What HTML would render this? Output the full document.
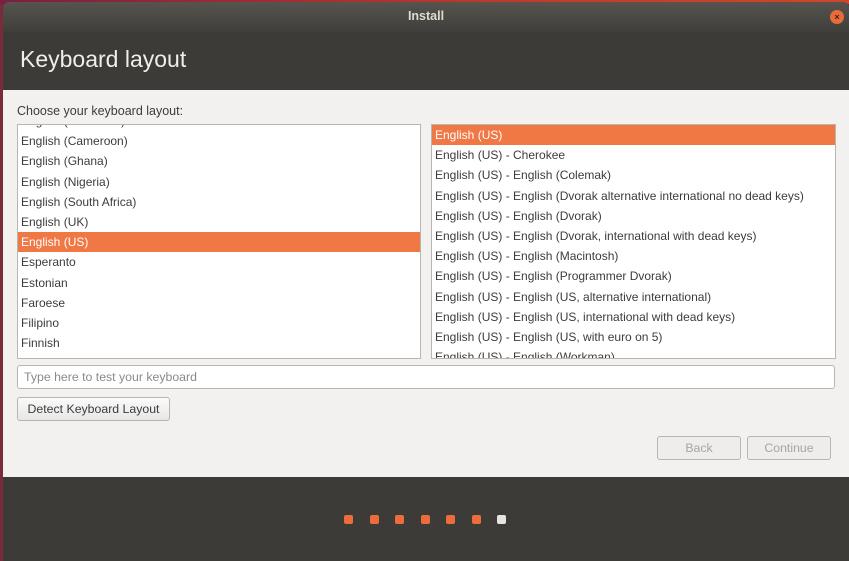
<!DOCTYPE html>
<html><head><style>
body{margin:0;width:849px;height:561px;overflow:hidden;background:#7a2a3a;font-family:"Liberation Sans",sans-serif;position:relative}
.bgtop{position:absolute;left:0;top:0;width:849px;height:4px;background:linear-gradient(90deg,#7a2040,#c03a2a 60%,#d0452a)}
.win{position:absolute;left:3px;top:2px;width:846px;height:559px;background:#3c3b37;border-radius:6px 6px 0 0;overflow:hidden}
.title{position:absolute;top:0;left:0;right:0;height:30px;background:linear-gradient(#57544e,#3f3e3a);text-align:center;line-height:29px;color:#dfdbd2;font-size:12.5px;font-weight:bold}
.close{position:absolute;right:5px;top:8px;width:14px;height:14px;border-radius:7px;background:#e86b3a;color:#4a2010;font-size:9px;line-height:14px;text-align:center}
h1{position:absolute;left:17px;top:44px;margin:0;font-weight:normal;font-size:23px;color:#f0eeea}
.content{position:absolute;left:0;top:88px;width:846px;height:387px;background:#f2f1f0}
.lbl{position:absolute;left:14px;top:14px;font-size:12.5px;color:#3c3c3c}
.list{position:absolute;background:#fff;border:1px solid #b9b6b0;overflow:hidden;font-size:12px;color:#3c3c3c}
.list div{height:20.2px;line-height:20px;padding-left:3px;white-space:nowrap}
.sel{background:#ef7845;color:#fff}
.input{position:absolute;left:14px;top:275px;width:810px;height:22px;border:1px solid #b9b6b0;border-radius:3px;background:#fff;font-size:12.3px;color:#8a8a8a;line-height:22px;padding-left:6px;box-sizing:content-box}
.btn{position:absolute;border:1px solid #b9b6b0;border-radius:3px;background:linear-gradient(#fafafa,#e8e7e5);font-size:12.3px;text-align:center;line-height:22px}
.bottom{position:absolute;left:0;top:475px;width:846px;height:84px;background:#3c3b37}
.dot{position:absolute;top:515px;width:9px;height:9px;border-radius:2px;background:#ec6c3b}
</style></head><body>
<div class="bgtop"></div>
<div class="win">
<div class="title">Install<div class="close">×</div></div>
<h1>Keyboard layout</h1>
<div class="content">
<div class="lbl">Choose your keyboard layout:</div>
<div class="list" style="left:14px;top:34px;width:402px;height:233px">
<div style="margin-top:-14px">English (Australian)</div>
<div>English (Cameroon)</div><div>English (Ghana)</div><div>English (Nigeria)</div><div>English (South Africa)</div><div>English (UK)</div><div class="sel">English (US)</div><div>Esperanto</div><div>Estonian</div><div>Faroese</div><div>Filipino</div><div>Finnish</div><div>French</div>
</div>
<div class="list" style="left:428px;top:34px;width:403px;height:233px">
<div class="sel">English (US)</div>
<div>English (US) - Cherokee</div>
<div>English (US) - English (Colemak)</div>
<div>English (US) - English (Dvorak alternative international no dead keys)</div>
<div>English (US) - English (Dvorak)</div>
<div>English (US) - English (Dvorak, international with dead keys)</div>
<div>English (US) - English (Macintosh)</div>
<div>English (US) - English (Programmer Dvorak)</div>
<div>English (US) - English (US, alternative international)</div>
<div>English (US) - English (US, international with dead keys)</div>
<div>English (US) - English (US, with euro on 5)</div>
<div>English (US) - English (Workman)</div>
</div>
<div class="input">Type here to test your keyboard</div>
<div class="btn" style="left:14px;top:307px;width:151px;color:#3c3c3c">Detect Keyboard Layout</div>
<div class="btn" style="left:654px;top:346px;width:82px;color:#a5a5a5;background:#eeedeb">Back</div>
<div class="btn" style="left:744px;top:346px;width:82px;color:#a5a5a5;background:#eeedeb">Continue</div>
</div>
<div class="bottom"></div>
</div>
<div class="dot" style="left:344px"></div><div class="dot" style="left:370px"></div><div class="dot" style="left:395px"></div><div class="dot" style="left:421px"></div><div class="dot" style="left:446px"></div><div class="dot" style="left:472px"></div><div class="dot" style="left:497px;background:#e6e4e0"></div>
</body></html>
